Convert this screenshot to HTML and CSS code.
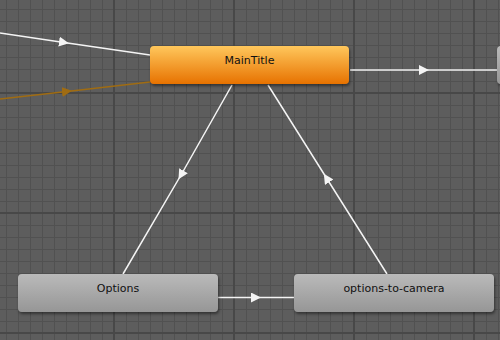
FILE: index.html
```html
<!DOCTYPE html>
<html lang="en">
<head>
  <meta charset="UTF-8" />
  <title>Animator – Base Layer</title>
  <link rel="stylesheet" href="styles.css">
</head>
<body>
  <div class="graph">
    <svg class="edges" width="500" height="340" viewBox="0 0 500 340">
      <defs>
        <marker id="arrow" viewBox="0 0 10 10" refX="5" refY="5" markerWidth="10" markerHeight="10" markerUnits="userSpaceOnUse" orient="auto">
          <path d="M0,0 L10,5 L0,10 z" fill="#f4f4f4" />
        </marker>
        <marker id="arrowOrange" viewBox="0 0 10 10" refX="5" refY="5" markerWidth="10" markerHeight="10" markerUnits="userSpaceOnUse" orient="auto">
          <path d="M0,0 L10,5 L0,10 z" fill="#a06c12" />
        </marker>
      </defs>
      <path class="edge" d="M0,33 L64,42.4 L150,55" />
      <path class="edge orange" d="M0,99 L67,91.4 L150,82" />
      <path class="edge" d="M350,70 L424,70 L498,70" />
      <path class="edge" d="M232,85 L181,175 L123,274" />
      <path class="edge" d="M387,274 L326.5,178 L268,85" />
      <path class="edge" d="M218,297.5 L256,297.5 L294,297.5" />
    </svg>

    <div class="node active" style="left:150px;top:46px">MainTitle</div>
    <div class="node" style="left:497px;top:46px"></div>
    <div class="node" style="left:18px;top:274px">Options</div>
    <div class="node" style="left:294px;top:274px">options-to-camera</div>
  </div>
</body>
</html>
```

FILE: styles.css
```css
*{box-sizing:border-box;margin:0;padding:0;}
body{background:#5c5c5c;font-family:"DejaVu Sans",Verdana,sans-serif;overflow:hidden;}

.graph{position:relative;width:500px;height:340px;overflow:hidden;background-color:#5d5d5d;
  background-image:
    linear-gradient(90deg,#484848 2px,transparent 2px),
    linear-gradient(#484848 2px,transparent 2px),
    linear-gradient(90deg,#515151 1px,transparent 1px),
    linear-gradient(#515151 1px,transparent 1px);
  background-size:120px 120px,120px 120px,12px 12px,12px 12px;
  background-position:113px 92px,113px 92px,6px 9px,6px 9px;}

.edges{position:absolute;left:0;top:0;}
.edge{fill:none;stroke:#f4f4f4;stroke-width:1.5;marker-mid:url(#arrow);}
.edge.orange{stroke:#a06c12;marker-mid:url(#arrowOrange);}

.node{position:absolute;width:200px;height:38px;padding-top:8px;border-radius:4px;
  font-size:11px;line-height:14px;text-align:center;color:#111;
  background:linear-gradient(#bababa,#969696);
  box-shadow:1px 2px 3px rgba(0,0,0,.45);}
.node.active{width:199px;background:linear-gradient(#ffc75c,#e77200);}
```
